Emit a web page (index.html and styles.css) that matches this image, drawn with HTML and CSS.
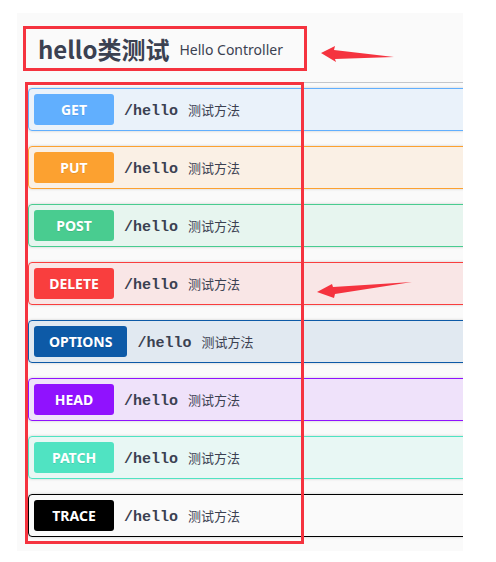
FILE: index.html
```html
<!DOCTYPE html>
<html lang="zh-CN">
<head>
    <meta charset="UTF-8">
    <meta name="viewport" content="width=device-width, initial-scale=1.0">
    <title>hello类测试</title>
    <link rel="stylesheet" href="styles.css">
</head>
<body>
    <div class="panel">
        <div class="tag">
            <h4>hello类测试</h4>
            <small>Hello Controller</small>
        </div>
        <div class="ops">
            <div class="opblock get">
                <div class="summary"><span class="method">GET</span><span class="path">/hello</span><span class="desc">测试方法</span></div>
            </div>
            <div class="opblock put">
                <div class="summary"><span class="method">PUT</span><span class="path">/hello</span><span class="desc">测试方法</span></div>
            </div>
            <div class="opblock post">
                <div class="summary"><span class="method">POST</span><span class="path">/hello</span><span class="desc">测试方法</span></div>
            </div>
            <div class="opblock delete">
                <div class="summary"><span class="method">DELETE</span><span class="path">/hello</span><span class="desc">测试方法</span></div>
            </div>
            <div class="opblock options">
                <div class="summary"><span class="method">OPTIONS</span><span class="path">/hello</span><span class="desc">测试方法</span></div>
            </div>
            <div class="opblock head">
                <div class="summary"><span class="method">HEAD</span><span class="path">/hello</span><span class="desc">测试方法</span></div>
            </div>
            <div class="opblock patch">
                <div class="summary"><span class="method">PATCH</span><span class="path">/hello</span><span class="desc">测试方法</span></div>
            </div>
            <div class="opblock trace">
                <div class="summary"><span class="method">TRACE</span><span class="path">/hello</span><span class="desc">测试方法</span></div>
            </div>
        </div>
    </div>

    <!-- 标注 -->
    <div class="mark mark-tag"></div>
    <div class="mark mark-ops"></div>
    <svg class="arrows" width="496" height="562" viewBox="0 0 496 562">
        <polygon points="321,53 335,46 334,50 394,57 335,59 336,62" fill="#f5333f"/>
        <polygon points="317,292 332,284 333,287 412,282 335,294 334,298" fill="#f5333f"/>
    </svg>
</body>
</html>
```

FILE: styles.css
```css
body {
    margin: 0;
    padding: 0;
    background-color: #fff;
    font-family: "Noto Sans", "Noto Sans CJK SC", sans-serif;
    color: #3b4151;
}

.panel {
    box-sizing: border-box;
    width: 446px;
    height: 538px;
    margin: 13px 0 0 17px;
    padding: 3px 0 0 11px;
    background-color: #fafafa;
    overflow: hidden;
}

.tag {
    display: flex;
    align-items: center;
    width: 480px;
    height: 46px;
    padding: 10px 20px 10px 10px;
    border-bottom: 1px solid #c4c6ca;
}

.tag h4 {
    margin: 0;
    font-size: 24px;
    font-weight: 700;
    font-family: "Noto Sans CJK SC", "Noto Sans", sans-serif;
    line-height: 30px;
}

.tag small {
    padding: 0 10px;
    font-size: 14px;
    font-weight: 400;
}

.ops {
    width: 480px;
    margin-top: 5px;
}

.opblock {
    margin-bottom: 15px;
    border: 1px solid #000;
    border-radius: 4px;
    box-shadow: 0 0 3px rgba(0, 0, 0, .19);
}

.summary {
    display: flex;
    align-items: baseline;
    padding: 5px;
}

.method {
    box-sizing: border-box;
    min-width: 80px;
    padding: 6px 15px;
    border-radius: 3px;
    background-color: #000;
    color: #fff;
    font-size: 14px;
    font-weight: 700;
    line-height: 19px;
    text-align: center;
    text-shadow: 0 1px 0 rgba(0, 0, 0, .1);
}

.path {
    padding: 0 10px;
    font-family: "Liberation Mono", monospace;
    font-size: 15px;
    font-weight: 700;
}

.desc {
    font-size: 13px;
    font-family: "Noto Sans CJK SC", sans-serif;
}

.get { border-color: #61affe; background-color: rgba(97, 175, 254, .1); }
.get .method { background-color: #61affe; }

.put { border-color: #fca130; background-color: rgba(252, 161, 48, .1); }
.put .method { background-color: #fca130; }

.post { border-color: #49cc90; background-color: rgba(73, 204, 144, .1); }
.post .method { background-color: #49cc90; }

.delete { border-color: #f93e3e; background-color: rgba(249, 62, 62, .1); }
.delete .method { background-color: #f93e3e; }

.options { border-color: #0d5aa7; background-color: rgba(13, 90, 167, .1); }
.options .method { background-color: #0d5aa7; }

.head { border-color: #9012fe; background-color: rgba(144, 18, 254, .1); }
.head .method { background-color: #9012fe; }

.patch { border-color: #50e3c2; background-color: rgba(80, 227, 194, .1); }
.patch .method { background-color: #50e3c2; }

.trace { border-color: #000; }

/* 标注框 */
.mark {
    position: absolute;
    box-sizing: border-box;
    border: 3px solid #f5333f;
}

.mark-tag {
    left: 23px;
    top: 26px;
    width: 284px;
    height: 45px;
}

.mark-ops {
    left: 25px;
    top: 82px;
    width: 279px;
    height: 462px;
}

.arrows {
    position: absolute;
    left: 0;
    top: 0;
}
```
